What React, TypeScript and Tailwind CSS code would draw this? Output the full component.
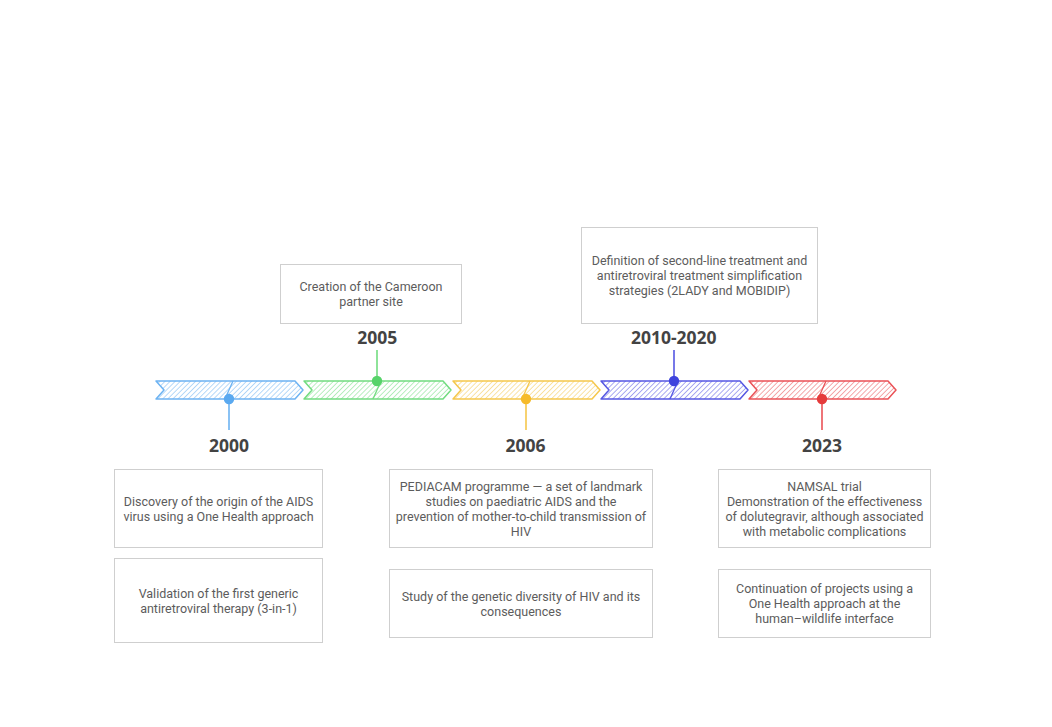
import React from 'react';

type Stop = {
  id: string;
  year: string;
  color: string;
  dot: string;
  up: boolean;
};

const stops: Stop[] = [
  { id: 'a', year: '2000', color: '#6db3f2', dot: '#5aa9f0', up: false },
  { id: 'b', year: '2005', color: '#72dc80', dot: '#57d36a', up: true },
  { id: 'c', year: '2006', color: '#f5c74c', dot: '#f6bb2a', up: false },
  { id: 'd', year: '2010-2020', color: '#5557e3', dot: '#3f44dd', up: true },
  { id: 'e', year: '2023', color: '#ea5257', dot: '#e53b3b', up: false },
];

function Segment({ stop }: { stop: Stop }) {
  const pid = `hatch-${stop.id}`;
  const dy = stop.up ? 31 : 49;
  return (
    <svg width="148" height="80" viewBox="0 0 148 80" className="block overflow-visible">
      <defs>
        <pattern id={pid} width="3.6" height="3.6" patternUnits="userSpaceOnUse" patternTransform="rotate(45)">
          <line x1="0" y1="0" x2="0" y2="3.6" stroke={stop.color} strokeWidth="1" />
        </pattern>
      </defs>
      {stop.up ? (
        <line x1="74" y1="0" x2="74" y2="31" stroke={stop.color} strokeWidth="1.6" />
      ) : (
        <line x1="74" y1="49" x2="74" y2="80" stroke={stop.color} strokeWidth="1.6" />
      )}
      <polygon points="1,31 140,31 148,40 140,49 1,49 9,40" fill={`url(#${pid})`} stroke={stop.color} strokeWidth="1.5" strokeLinejoin="round" />
      <line x1="70" y1="49" x2="78" y2="31" stroke={stop.color} strokeWidth="1.3" />
      <circle cx="74" cy={dy} r="5.2" fill={stop.dot} />
    </svg>
  );
}

function Box({ className, children }: { className: string; children: React.ReactNode }) {
  return (
    <div className={`flex items-center justify-center whitespace-nowrap border border-[#cfcfcf] bg-white text-center text-[12.5px] leading-[15px] text-[#5c5c5c] ${className}`}>
      <p>{children}</p>
    </div>
  );
}

export default function App() {
  return (
    <div className="h-[727px] w-[1052px] overflow-hidden bg-white" style={{ fontFamily: 'Roboto, "Liberation Sans", sans-serif' }}>
      {/* boxes above the line */}
      <div className="flex h-[324px] items-end">
        <Box className="ml-[280px] h-[60px] w-[182px]">
          Creation of the Cameroon<br />partner site
        </Box>
        <Box className="ml-[119px] h-[97px] w-[237px]">
          Definition of second-line treatment and<br />antiretroviral treatment simplification<br />strategies (2LADY and MOBIDIP)
        </Box>
      </div>

      {/* timeline */}
      <div className="ml-[155px] flex gap-[0.25px]">
        {stops.map((s) => (
          <div key={s.id} className="flex w-[148px] flex-col items-center">
            <div
              className={`h-[26px] whitespace-nowrap text-[17.5px] font-bold leading-[26px] text-[#434343] ${s.up ? '' : 'invisible'}`}
              style={{ fontFamily: '"Open Sans", "Liberation Sans", sans-serif' }}
            >
              {s.year}
            </div>
            <Segment stop={s} />
            <div
              className={`h-[30px] whitespace-nowrap text-[17.5px] font-bold leading-[30px] text-[#434343] ${s.up ? 'invisible' : ''}`}
              style={{ fontFamily: '"Open Sans", "Liberation Sans", sans-serif' }}
            >
              {s.year}
            </div>
          </div>
        ))}
      </div>

      {/* boxes below the line */}
      <div className="mt-[9px] flex items-start">
        <div className="ml-[114px] flex w-[209px] flex-col gap-[10px]">
          <Box className="h-[79px]">
            Discovery of the origin of the AIDS<br />virus using a One Health approach
          </Box>
          <Box className="h-[85px]">
            Validation of the first generic<br />antiretroviral therapy (3-in-1)
          </Box>
        </div>
        <div className="ml-[66px] flex w-[264px] flex-col gap-[21px]">
          <Box className="h-[79px]">
            PEDIACAM programme — a set of landmark<br />studies on paediatric AIDS and the<br />prevention of mother-to-child transmission of<br />HIV
          </Box>
          <Box className="h-[69px]">
            Study of the genetic diversity of HIV and its<br />consequences
          </Box>
        </div>
        <div className="ml-[65px] flex w-[213px] flex-col gap-[21px]">
          <Box className="h-[79px]">
            NAMSAL trial<br />Demonstration of the effectiveness<br />of dolutegravir, although associated<br />with metabolic complications
          </Box>
          <Box className="h-[69px]">
            Continuation of projects using a<br />One Health approach at the<br />human–wildlife interface
          </Box>
        </div>
      </div>
    </div>
  );
}
